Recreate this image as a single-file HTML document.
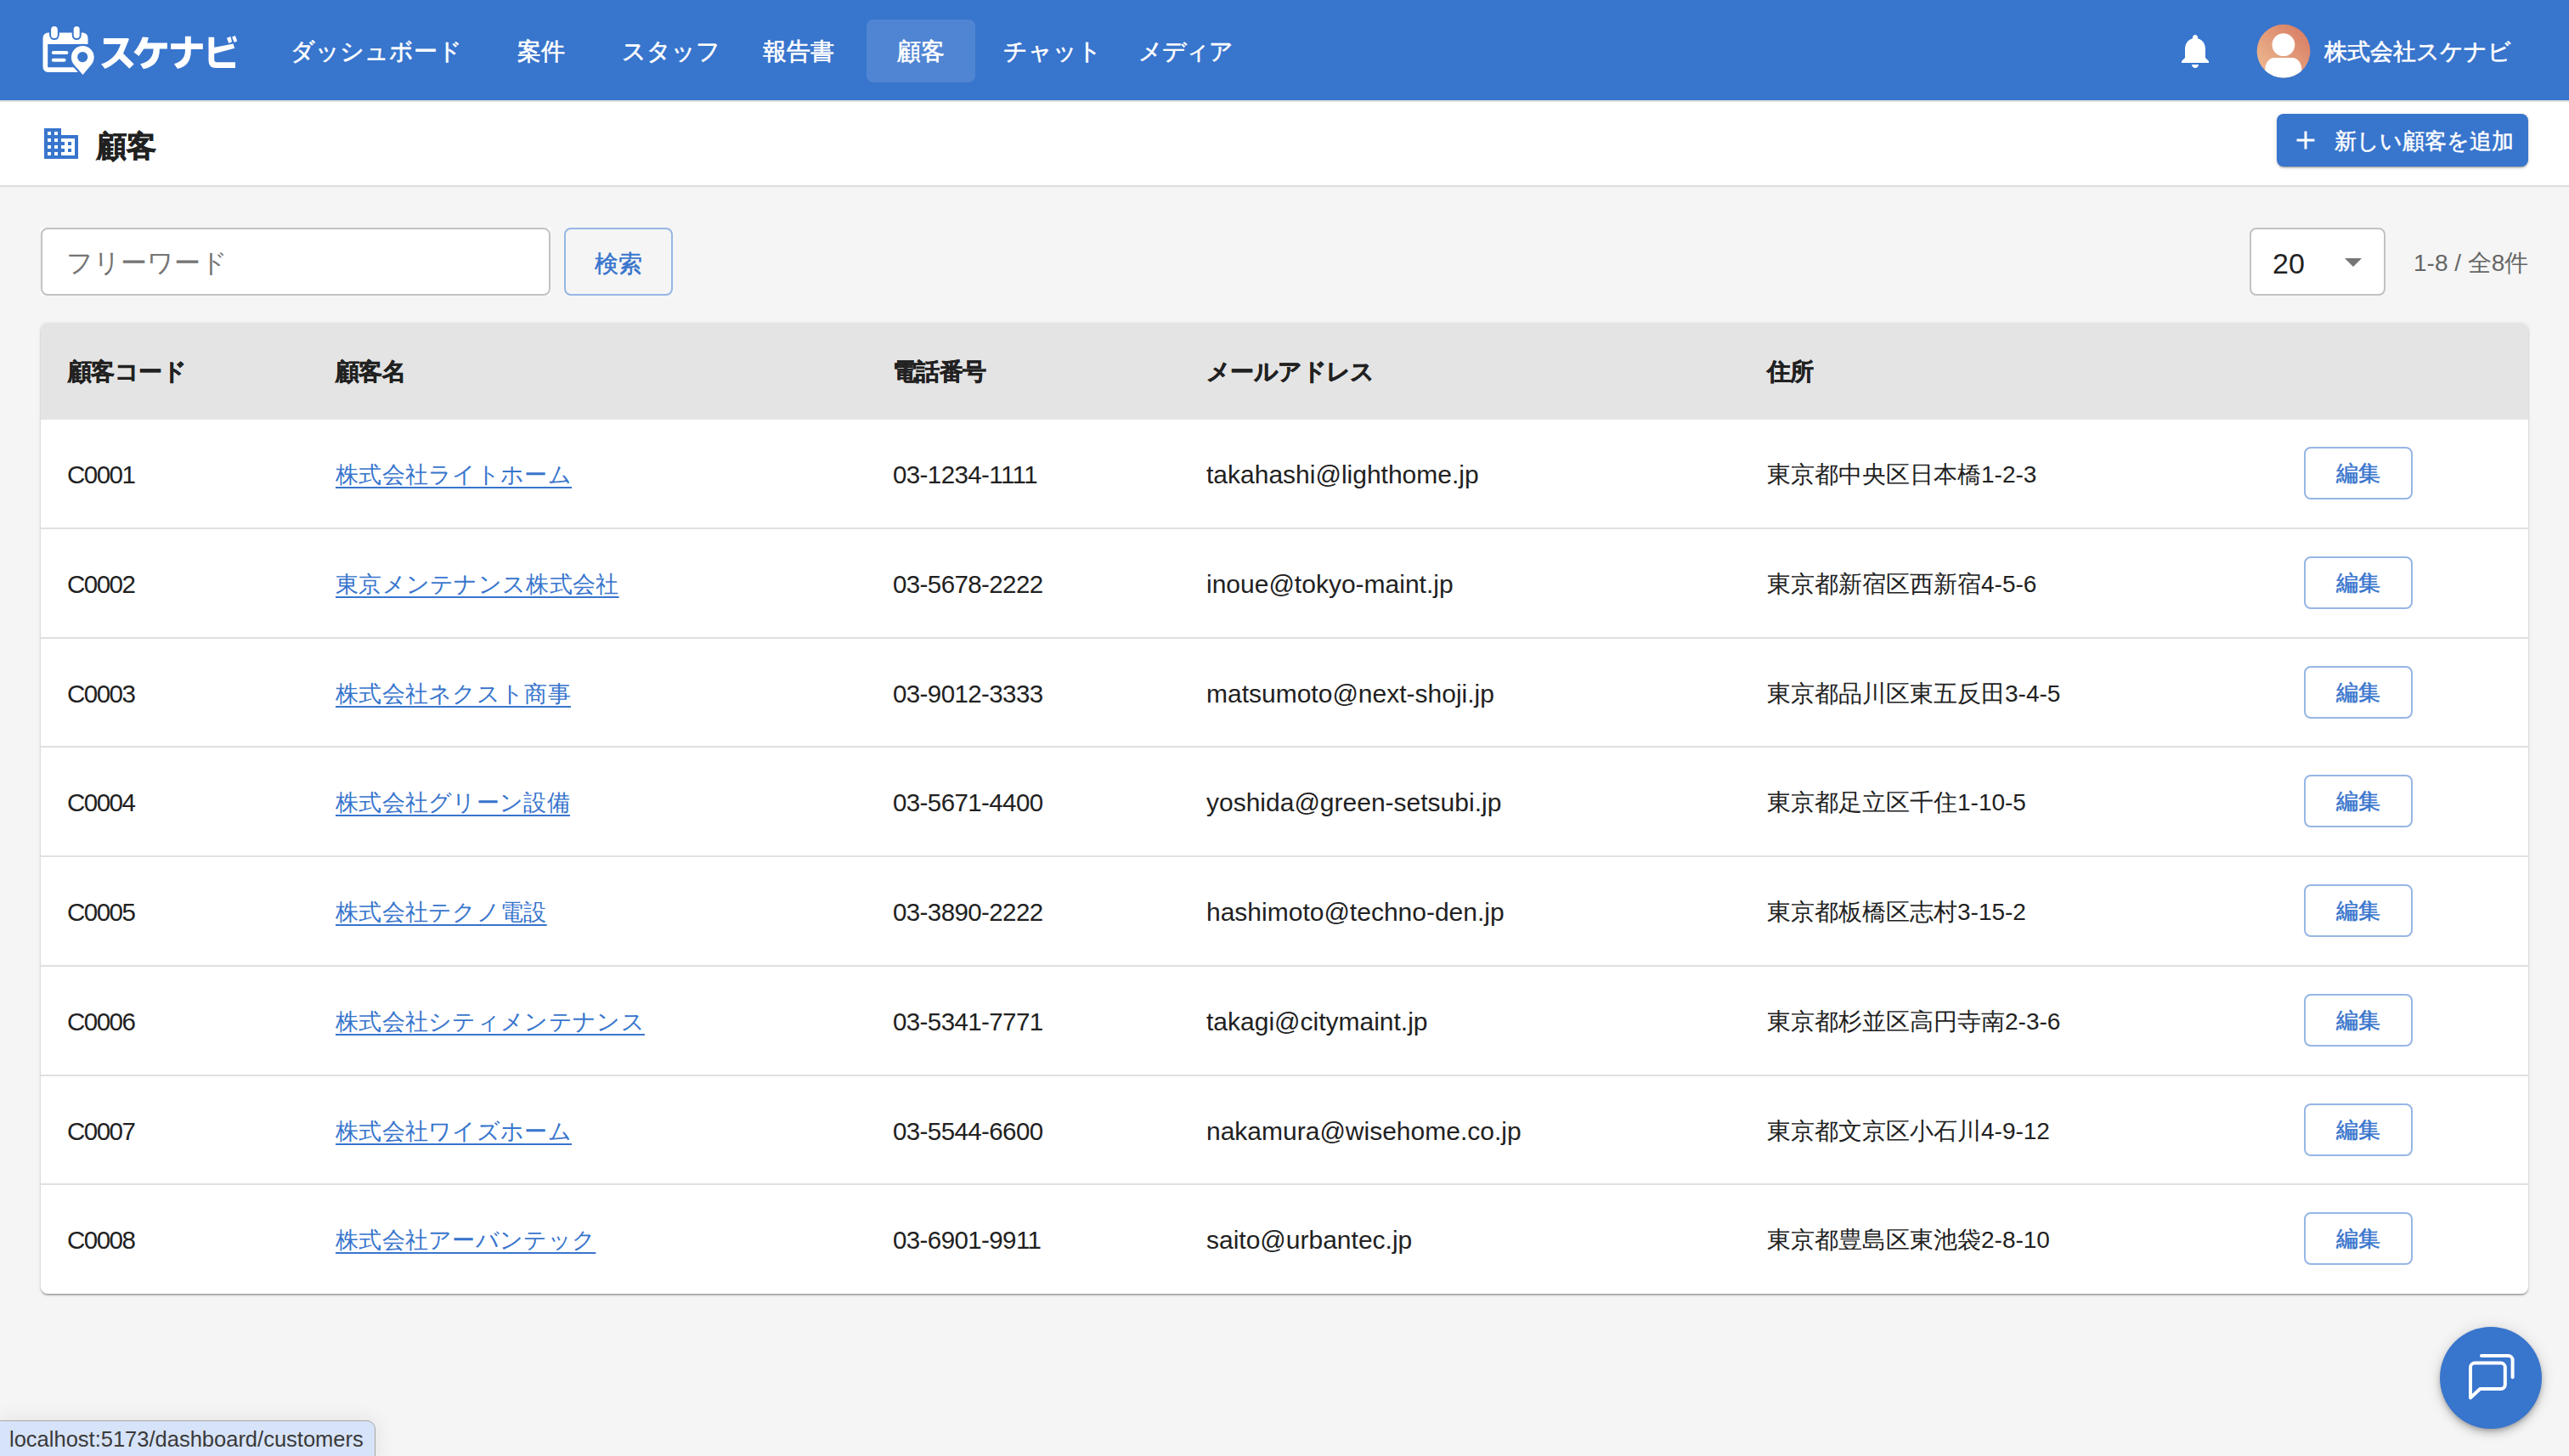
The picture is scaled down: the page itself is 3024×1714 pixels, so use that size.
<!DOCTYPE html>
<html lang="ja">
<head>
<meta charset="utf-8">
<title>顧客</title>
<style>
*{box-sizing:border-box;margin:0;padding:0}
html,body{width:3024px;height:1714px;overflow:hidden}
body{background:#f5f5f5;font-family:"Liberation Sans",sans-serif;color:#212121;position:relative}
.abs{position:absolute;white-space:nowrap}
svg.abs{display:block}
#hdr{position:absolute;left:0;top:0;width:3024px;height:118px;background:#3875cd;box-shadow:0 2px 1px rgba(0,0,0,0.12);z-index:2}
.nav{position:absolute;top:41px;height:40px;line-height:40px;font-size:28px;color:#fff;white-space:nowrap;-webkit-text-stroke:0.6px #fff}
#active{position:absolute;left:1020px;top:23px;width:128px;height:74px;border-radius:8px;background:rgba(255,255,255,0.12)}
#sub{position:absolute;left:0;top:118px;width:3024px;height:102px;background:#fff;border-bottom:2px solid #dedede}
#addbtn{position:absolute;left:2680px;top:134px;width:296px;height:62px;background:#3875cd;border-radius:8px;box-shadow:0 3px 1px -2px rgba(0,0,0,.2),0 2px 2px 0 rgba(0,0,0,.14),0 1px 5px 0 rgba(0,0,0,.12);color:#fff}
#search{position:absolute;left:48px;top:268px;width:600px;height:80px;background:#fff}
#sbord{position:absolute;left:0;top:0;width:600px;height:80px;border:2px solid #c2c2c2;border-radius:8px}
#sbtn{position:absolute;left:664px;top:268px;width:128px;height:80px;border:2px solid #97b6e5;border-radius:8px;color:#3875cd;font-size:28px;text-align:center;line-height:80px;-webkit-text-stroke:0.5px #3875cd}
#sel{position:absolute;left:2648px;top:268px;width:160px;height:80px;border:2px solid #c2c2c2;border-radius:8px;background:#fff}
#paper{position:absolute;left:48px;top:380px;width:2928px;height:1142.75px;background:#fff;border-radius:8px;box-shadow:0 2px 2px -1px rgba(0,0,0,.25),0 2px 2px 0 rgba(0,0,0,.14),0 1px 4px 0 rgba(0,0,0,.12);overflow:hidden}
#thead{position:absolute;left:0;top:0;width:2928px;height:114px;background:#e4e4e4}
.th{position:absolute;top:38px;font-size:28px;font-weight:bold;line-height:40px;color:#212121;white-space:nowrap;-webkit-text-stroke:0.5px #212121;letter-spacing:-0.6px}
.row{position:absolute;left:0;width:2928px;height:128.75px;border-bottom:2px solid #e0e0e0}
.td{position:absolute;font-size:28px;line-height:40px;top:45px;color:#212121;white-space:nowrap}
.c1{left:31px;font-size:29.5px;letter-spacing:-1.5px}
.lnk{left:347px;font-size:27px;letter-spacing:0.3px;color:#3875cd;text-decoration:underline;text-decoration-thickness:2px;text-underline-offset:5px}
.c3{left:1003px;font-size:29.5px;letter-spacing:-0.6px}
.c4{left:1372px;font-size:30px}
.c5{left:2032px}
.edit{position:absolute;left:2664px;top:32px;width:128px;height:62px;border:2px solid #97b6e5;border-radius:8px;color:#3875cd;font-size:26px;text-align:center;line-height:58px;-webkit-text-stroke:0.5px #3875cd}
#fab{position:absolute;left:2872px;top:1562px;width:120px;height:120px;border-radius:60px;background:#3875cd;box-shadow:0 3px 5px -1px rgba(0,0,0,.2),0 6px 10px 0 rgba(0,0,0,.14),0 1px 18px 0 rgba(0,0,0,.12)}
#status{position:absolute;left:-2px;top:1672px;width:444px;height:50px;background:#d7e3f8;border:1px solid #a8a8a8;border-top-right-radius:10px;font-size:25.5px;color:#3a3a3a;line-height:42px;padding-left:12px;box-shadow:0 0 24px rgba(0,0,0,0.09)}

</style>
</head>
<body>
<div id="hdr">
  <svg class="abs" style="left:44px;top:26px" width="80" height="68" viewBox="44 26 80 68">
    <path d="M50.5 44.4a6 6 0 0 1 6-6H97.5a6 6 0 0 1 6 6V51.9H56.2V79.2H97V85.1H56.5a6 6 0 0 1-6-6Z" fill="#fff"/>
    <rect x="58.1" y="28.9" width="11.7" height="18.2" rx="5.85" fill="#3875cd"/>
    <rect x="84.7" y="28.9" width="11" height="18.2" rx="5.5" fill="#3875cd"/>
    <rect x="60.1" y="30.9" width="7.7" height="14.2" rx="3.85" fill="#fff"/>
    <rect x="86.7" y="30.9" width="7" height="14.2" rx="3.5" fill="#fff"/>
    <rect x="60.8" y="60.1" width="19.6" height="4" rx="2" fill="#fff"/>
    <rect x="60.8" y="68.7" width="16.8" height="4" rx="2" fill="#fff"/>
    <path d="M87.16 76.25A13.4 13.4 0 1 1 107.44 76.25L97.5 88Z" fill="#3875cd" stroke="#3875cd" stroke-width="4.5" stroke-linejoin="round"/>
    <path d="M87.16 76.25A13.4 13.4 0 1 1 107.44 76.25L97.5 88Z" fill="#fff"/>
    <circle cx="97.2" cy="67.1" r="6.1" fill="#3875cd"/>
  </svg>
  <svg class="abs" style="left:116px;top:38px" width="168" height="48" viewBox="116 38 168 48" fill="#fff"><title>スケナビ</title>
    <path d="M121.9 45.1L150.6 45.1Q151.8 45.1 151.8 46.6L145 63.1L157.7 75.4L152.3 80.7L140.6 69.2Q132 77.5 123.6 80.9L119.1 75.6Q136.5 69.5 142 52L121.9 52Z"/>
    <path d="M167.8 43.4L174.9 44.1L173.2 50.4L196.9 50.4L196.9 57.5L187.9 57.5C187.9 72 181 79 168.8 81.2L165.1 75.3C176 73 180.6 66 180.6 57.5L169.4 57.5L163.5 66L157.4 61.6Q164 54 167.8 43.4Z"/>
    <path d="M201.1 51.2L217.9 51.2L217.9 42.8L224.8 42.8L224.8 51.2L238.8 51.2L238.8 57.9L224.8 57.9L224.8 60C224.8 72 219 79 209 81L204.9 75.3C215 72.5 217.9 66 217.9 60L217.9 57.9L201.1 57.9Z"/>
    <path d="M245.5 43.7L252.2 43.7L252.2 55.8L274.5 51.5L276.2 56.7L252.2 63.2L252.2 70Q252.2 73.3 255.5 73.3L277 73.3L277 80L254 80Q245.5 80 245.5 71.5Z"/>
    <path d="M266.9 44.7L271.4 43L273.1 49.3L269.3 51ZM273.1 43.5L276.9 41.9L279.2 48.3L275.8 50Z"/>
  </svg>
  <div id="active"></div>
  <div class="nav" style="left:342px">ダッシュボード</div>
  <div class="nav" style="left:609px">案件</div>
  <div class="nav" style="left:731.5px">スタッフ</div>
  <div class="nav" style="left:898px">報告書</div>
  <div class="nav" style="left:1056px">顧客</div>
  <div class="nav" style="left:1181px">チャット</div>
  <div class="nav" style="left:1340px;letter-spacing:-1.5px">メディア</div>
  <svg class="abs" style="left:2560px;top:36px" width="48" height="48" viewBox="0 0 24 24"><path fill="#fff" d="M12 22c1.1 0 2-.9 2-2h-4c0 1.1.89 2 2 2m6-6v-5c0-3.07-1.64-5.64-4.5-6.32V4c0-.83-.67-1.5-1.5-1.5s-1.5.67-1.5 1.5v.68C7.63 5.36 6 7.92 6 11v5l-2 2v1h16v-1z"/></svg>
  <svg class="abs" style="left:2656px;top:28px" width="64" height="64" viewBox="2656 28 64 64">
    <defs>
      <linearGradient id="ag" x1="0" y1="1" x2="1" y2="0"><stop offset="0" stop-color="#efbf95"/><stop offset="1" stop-color="#d6775f"/></linearGradient>
      <clipPath id="ac"><circle cx="2688" cy="60.2" r="31.4"/></clipPath>
    </defs>
    <circle cx="2688" cy="60.2" r="31.4" fill="url(#ag)"/>
    <g clip-path="url(#ac)" fill="#fff">
      <circle cx="2687.9" cy="52.7" r="13.4"/>
      <path d="M2666.3 100V82A11 14 0 0 1 2677.3 68H2698.3A11 14 0 0 1 2709.3 82V100Z"/>
    </g>
  </svg>
  <div class="nav" style="left:2736px;font-size:27px">株式会社スケナビ</div>
</div>
<div id="sub">
  <svg class="abs" style="left:48px;top:27px" width="48" height="48" viewBox="0 0 24 24"><path fill="#3875cd" d="M12 7V3H2v18h20V7H12zM6 19H4v-2h2v2zm0-4H4v-2h2v2zm0-4H4V9h2v2zm0-4H4V5h2v2zm4 12H8v-2h2v2zm0-4H8v-2h2v2zm0-4H8V9h2v2zm0-4H8V5h2v2zm10 12h-8v-2h2v-2h-2v-2h2v-2h-2V9h8v10zm-2-8h-2v2h2v-2zm0 4h-2v2h2v-2z"/></svg>
  <div class="abs" style="left:114px;top:29px;font-size:35px;font-weight:bold;line-height:50px;color:#212121;-webkit-text-stroke:0.8px #212121">顧客</div>
</div>
<div id="addbtn">
  <svg class="abs" style="left:16px;top:13px" width="36" height="36" viewBox="0 0 24 24"><path fill="#fff" d="M19 13h-6v6h-2v-6H5v-2h6V5h2v6h6v2z"/></svg>
  <div class="abs" style="left:68px;top:12px;font-size:26px;line-height:40px;-webkit-text-stroke:0.5px #fff">新しい顧客を追加</div>
</div>
<div id="search"><div id="sbord"></div><div class="abs" style="left:30px;top:22px;font-size:31px;line-height:40px;color:#757575">フリーワード</div></div>
<div id="sbtn"><span style="position:relative;top:1px">検索</span></div>
<div id="sel">
  <div class="abs" style="left:25px;top:20px;font-size:34px;line-height:40px;color:#212121">20</div>
  <svg class="abs" style="left:96px;top:14px" width="48" height="48" viewBox="0 0 24 24"><path fill="#757575" d="M7 10l5 5 5-5z"/></svg>
</div>
<div class="abs" style="left:2841px;top:290px;font-size:28px;line-height:40px;color:#666">1-8 / 全8件</div>
<div id="paper">
  <div id="thead">
    <div class="th" style="left:32px">顧客コード</div>
    <div class="th" style="left:347px">顧客名</div>
    <div class="th" style="left:1003px">電話番号</div>
    <div class="th" style="left:1372px">メールアドレス</div>
    <div class="th" style="left:2032px">住所</div>
  </div>
<div class="row" style="top:114px"><div class="td c1">C0001</div><div class="td lnk">株式会社ライトホーム</div><div class="td c3">03-1234-1111</div><div class="td c4">takahashi@lighthome.jp</div><div class="td c5">東京都中央区日本橋1-2-3</div><div class="edit">編集</div></div>
<div class="row" style="top:242.75px"><div class="td c1">C0002</div><div class="td lnk">東京メンテナンス株式会社</div><div class="td c3">03-5678-2222</div><div class="td c4">inoue@tokyo-maint.jp</div><div class="td c5">東京都新宿区西新宿4-5-6</div><div class="edit">編集</div></div>
<div class="row" style="top:371.5px"><div class="td c1">C0003</div><div class="td lnk">株式会社ネクスト商事</div><div class="td c3">03-9012-3333</div><div class="td c4">matsumoto@next-shoji.jp</div><div class="td c5">東京都品川区東五反田3-4-5</div><div class="edit">編集</div></div>
<div class="row" style="top:500.25px"><div class="td c1">C0004</div><div class="td lnk">株式会社グリーン設備</div><div class="td c3">03-5671-4400</div><div class="td c4">yoshida@green-setsubi.jp</div><div class="td c5">東京都足立区千住1-10-5</div><div class="edit">編集</div></div>
<div class="row" style="top:629px"><div class="td c1">C0005</div><div class="td lnk">株式会社テクノ電設</div><div class="td c3">03-3890-2222</div><div class="td c4">hashimoto@techno-den.jp</div><div class="td c5">東京都板橋区志村3-15-2</div><div class="edit">編集</div></div>
<div class="row" style="top:757.75px"><div class="td c1">C0006</div><div class="td lnk">株式会社シティメンテナンス</div><div class="td c3">03-5341-7771</div><div class="td c4">takagi@citymaint.jp</div><div class="td c5">東京都杉並区高円寺南2-3-6</div><div class="edit">編集</div></div>
<div class="row" style="top:886.5px"><div class="td c1">C0007</div><div class="td lnk">株式会社ワイズホーム</div><div class="td c3">03-5544-6600</div><div class="td c4">nakamura@wisehome.co.jp</div><div class="td c5">東京都文京区小石川4-9-12</div><div class="edit">編集</div></div>
<div class="row" style="top:1015.25px;border-bottom:none"><div class="td c1">C0008</div><div class="td lnk">株式会社アーバンテック</div><div class="td c3">03-6901-9911</div><div class="td c4">saito@urbantec.jp</div><div class="td c5">東京都豊島区東池袋2-8-10</div><div class="edit">編集</div></div>
</div>
<div id="fab">
  <svg class="abs" style="left:0;top:0" width="120" height="120" viewBox="2872 1562 120 120" fill="none" stroke="#fff" stroke-width="4" stroke-linecap="round" stroke-linejoin="round">
    <path d="M2919.3 1635H2943.8a5 5 0 0 0 5-5V1609.6a5 5 0 0 0-5-5H2913a5 5 0 0 0-5 5V1645.5Z"/>
    <path d="M2921 1596.1H2952.6a5 5 0 0 1 5 5V1621.3"/>
  </svg>
</div>
<div id="status">localhost:5173/dashboard/customers</div>

</body>
</html>
